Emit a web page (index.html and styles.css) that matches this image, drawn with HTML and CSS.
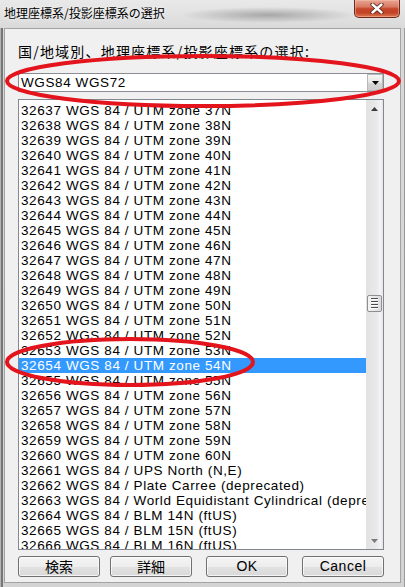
FILE: index.html
```html
<!DOCTYPE html>
<html lang="ja">
<head>
<meta charset="utf-8">
<title>地理座標系/投影座標系の選択</title>
<link rel="stylesheet" href="styles.css">
</head>
<body>
<div class="window">
  <div class="titlebar">
    <span class="title">地理座標系/投影座標系の選択</span>
    <div class="close">
      <svg width="14" height="11" viewBox="0 0 14 11">
        <path d="M2.5 1.5 L11.5 9.5 M11.5 1.5 L2.5 9.5" stroke="#5a2418" stroke-width="4.2" stroke-linecap="round"/>
        <path d="M2.5 1.5 L11.5 9.5 M11.5 1.5 L2.5 9.5" stroke="#ffffff" stroke-width="2.4" stroke-linecap="round"/>
      </svg>
    </div>
  </div>
  <div class="panel">
    <div class="label">国/地域別、地理座標系/投影座標系の選択:</div>
    <div class="combo">
      <span class="combo-text">WGS84 WGS72</span>
      <span class="combo-btn">
        <svg width="7" height="4" viewBox="0 0 7 4"><path d="M0 0 H7 L3.5 4 Z" fill="#000"/></svg>
      </span>
    </div>
    <div class="listbox">
      <div class="list">
        <div class="row">32637 WGS 84 / UTM zone 37N</div>
        <div class="row">32638 WGS 84 / UTM zone 38N</div>
        <div class="row">32639 WGS 84 / UTM zone 39N</div>
        <div class="row">32640 WGS 84 / UTM zone 40N</div>
        <div class="row">32641 WGS 84 / UTM zone 41N</div>
        <div class="row">32642 WGS 84 / UTM zone 42N</div>
        <div class="row">32643 WGS 84 / UTM zone 43N</div>
        <div class="row">32644 WGS 84 / UTM zone 44N</div>
        <div class="row">32645 WGS 84 / UTM zone 45N</div>
        <div class="row">32646 WGS 84 / UTM zone 46N</div>
        <div class="row">32647 WGS 84 / UTM zone 47N</div>
        <div class="row">32648 WGS 84 / UTM zone 48N</div>
        <div class="row">32649 WGS 84 / UTM zone 49N</div>
        <div class="row">32650 WGS 84 / UTM zone 50N</div>
        <div class="row">32651 WGS 84 / UTM zone 51N</div>
        <div class="row">32652 WGS 84 / UTM zone 52N</div>
        <div class="row">32653 WGS 84 / UTM zone 53N</div>
        <div class="row selected">32654 WGS 84 / UTM zone 54N</div>
        <div class="row">32655 WGS 84 / UTM zone 55N</div>
        <div class="row">32656 WGS 84 / UTM zone 56N</div>
        <div class="row">32657 WGS 84 / UTM zone 57N</div>
        <div class="row">32658 WGS 84 / UTM zone 58N</div>
        <div class="row">32659 WGS 84 / UTM zone 59N</div>
        <div class="row">32660 WGS 84 / UTM zone 60N</div>
        <div class="row">32661 WGS 84 / UPS North (N,E)</div>
        <div class="row">32662 WGS 84 / Plate Carree (deprecated)</div>
        <div class="row">32663 WGS 84 / World Equidistant Cylindrical (deprecated)</div>
        <div class="row">32664 WGS 84 / BLM 14N (ftUS)</div>
        <div class="row">32665 WGS 84 / BLM 15N (ftUS)</div>
        <div class="row">32666 WGS 84 / BLM 16N (ftUS)</div>
      </div>
      <div class="scrollbar">
        <div class="sb-arrow">
          <svg width="7" height="4" viewBox="0 0 7 4"><path d="M0 4 H7 L3.5 0 Z" fill="#3c3c3c"/></svg>
        </div>
        <div class="sb-track">
          <div class="sb-thumb">
            <span class="grip"></span><span class="grip"></span><span class="grip"></span><span class="grip"></span>
          </div>
        </div>
        <div class="sb-arrow">
          <svg width="7" height="4" viewBox="0 0 7 4"><path d="M0 0 H7 L3.5 4 Z" fill="#7a7a7a"/></svg>
        </div>
      </div>
    </div>
    <div class="buttons">
      <button class="btn btn-search">検索</button>
      <button class="btn">詳細</button>
      <button class="btn latin">OK</button>
      <button class="btn latin">Cancel</button>
    </div>
  </div>
  <svg class="marks" width="405" height="587" viewBox="0 0 405 587">
    <ellipse cx="203" cy="81" rx="196" ry="25" fill="none" stroke="#e3141c" stroke-width="4"/>
    <ellipse cx="130" cy="362" rx="123" ry="23" fill="none" stroke="#e3141c" stroke-width="4"/>
  </svg>
</div>
</body>
</html>
```

FILE: styles.css
```css
html, body {
  margin: 0;
  padding: 0;
}

body {
  width: 405px;
  height: 587px;
  overflow: hidden;
  background: #d2d2d2;
  font-family: "Noto Sans CJK JP", "Noto Sans", sans-serif;
  color: #000;
}

.window {
  position: relative;
  width: 405px;
  height: 587px;
  display: flex;
  flex-direction: column;
  background: linear-gradient(to bottom, #e6e6e6 0px, #d8d8d8 30px, #d3d3d3 100%);
  box-shadow: inset 1px 0 0 #b4b4b4, inset 3px 0 0 #767676, inset -1px 0 0 #9a9a9a;
}

.titlebar {
  height: 28px;
  flex: none;
  display: flex;
  align-items: flex-start;
  padding-left: 4px;
  background:
    radial-gradient(ellipse 88px 8px at 268px 15px, rgba(120, 120, 120, 0.55), rgba(120, 120, 120, 0)),
    linear-gradient(to bottom, #e9e9e9, #dadada);
}

.title {
  padding-top: 5px;
  font-size: 12px;
  line-height: 16px;
  white-space: nowrap;
  text-shadow: 0 0 4px #ffffff;
}

.close {
  margin-left: auto;
  margin-right: 5px;
  width: 46px;
  height: 18px;
  box-sizing: border-box;
  border: 1px solid #70291d;
  border-top: none;
  border-radius: 0 0 5px 5px;
  background: linear-gradient(to bottom, #e6a694 0%, #d97a63 40%, #c4452a 52%, #c24428 75%, #e07850 100%);
  display: flex;
  align-items: center;
  justify-content: center;
  box-shadow: inset 0 0 0 1px rgba(255, 200, 180, 0.45);
}

.panel {
  flex: 1;
  margin: 0 4px 4px 4px;
  border: 1px solid #a3a3a3;
  background: #f0f0f0;
  padding: 13px 16px 5px 13px;
  display: flex;
  flex-direction: column;
}

.label {
  height: 18px;
  font-size: 14px;
  line-height: 18px;
  letter-spacing: 1.2px;
  white-space: nowrap;
}

.combo {
  margin-top: 13px;
  height: 19px;
  box-sizing: border-box;
  border: 1px solid #8a8d94;
  background: #fff;
  display: flex;
  align-items: stretch;
}

.combo-text {
  flex: 1;
  padding-left: 2px;
  font-family: "Liberation Sans", Arial, sans-serif;
  font-size: 13.5px;
  letter-spacing: 0.6px;
  line-height: 17px;
}

.combo-btn {
  width: 16px;
  box-sizing: border-box;
  border: 1px solid #b8b8b8;
  background: linear-gradient(to bottom, #f6f6f6, #e6e6e6 50%, #d6d6d6 51%, #cccccc);
  display: flex;
  align-items: center;
  justify-content: center;
}

.listbox {
  margin-top: 7px;
  height: 451px;
  box-sizing: border-box;
  border: 1px solid #828790;
  background: #fff;
  display: flex;
  overflow: hidden;
}

.list {
  flex: 1;
  min-width: 0;
  padding-top: 3px;
  overflow: hidden;
}

.row {
  height: 15px;
  line-height: 15px;
  padding-left: 2px;
  font-family: "Liberation Sans", Arial, sans-serif;
  font-size: 13.5px;
  letter-spacing: 0.6px;
  white-space: nowrap;
  overflow: hidden;
}

.row.selected {
  background: #3399ff;
  color: #fff;
}

.scrollbar {
  width: 17px;
  flex: none;
  display: flex;
  flex-direction: column;
  background: linear-gradient(to right, #e2e2e2 0%, #e9e9e9 60%, #f3f3f3 85%, #e6e6e6 100%);
}

.sb-arrow {
  height: 17px;
  flex: none;
  display: flex;
  align-items: center;
  justify-content: center;
}

.sb-track {
  flex: 1;
  display: flex;
  flex-direction: column;
  align-items: center;
}

.sb-thumb {
  margin-top: 178px;
  width: 15px;
  height: 17px;
  box-sizing: border-box;
  border: 1px solid #8f8f8f;
  border-radius: 2px;
  background: linear-gradient(to right, #f4f4f4, #e8e8e8 50%, #dcdcdc);
  display: flex;
  flex-direction: column;
  align-items: center;
  justify-content: center;
  gap: 1px;
}

.grip {
  width: 7px;
  height: 1px;
  background: #4a4a4a;
  box-shadow: 0 1px 0 #ffffff;
  margin-bottom: 1px;
}

.buttons {
  margin-top: 6px;
  height: 21px;
  display: flex;
  gap: 14px;
}

.btn {
  width: 82px;
  height: 21px;
  margin: 0;
  padding: 0;
  box-sizing: border-box;
  border: 1px solid #707070;
  border-radius: 3px;
  background: linear-gradient(to bottom, #f4f4f4 0%, #ededed 50%, #e2e2e2 51%, #d9d9d9 100%);
  box-shadow: inset 0 0 0 1px rgba(255, 255, 255, 0.7);
  font-family: "Noto Sans CJK JP", sans-serif;
  font-size: 14px;
  line-height: 19px;
  color: #000;
}

.btn-search {
  margin-right: -4px;
}

.btn.latin {
  font-family: "Liberation Sans", Arial, sans-serif;
  letter-spacing: 0.5px;
}

.marks {
  position: absolute;
  left: 0;
  top: 0;
  pointer-events: none;
}
```
